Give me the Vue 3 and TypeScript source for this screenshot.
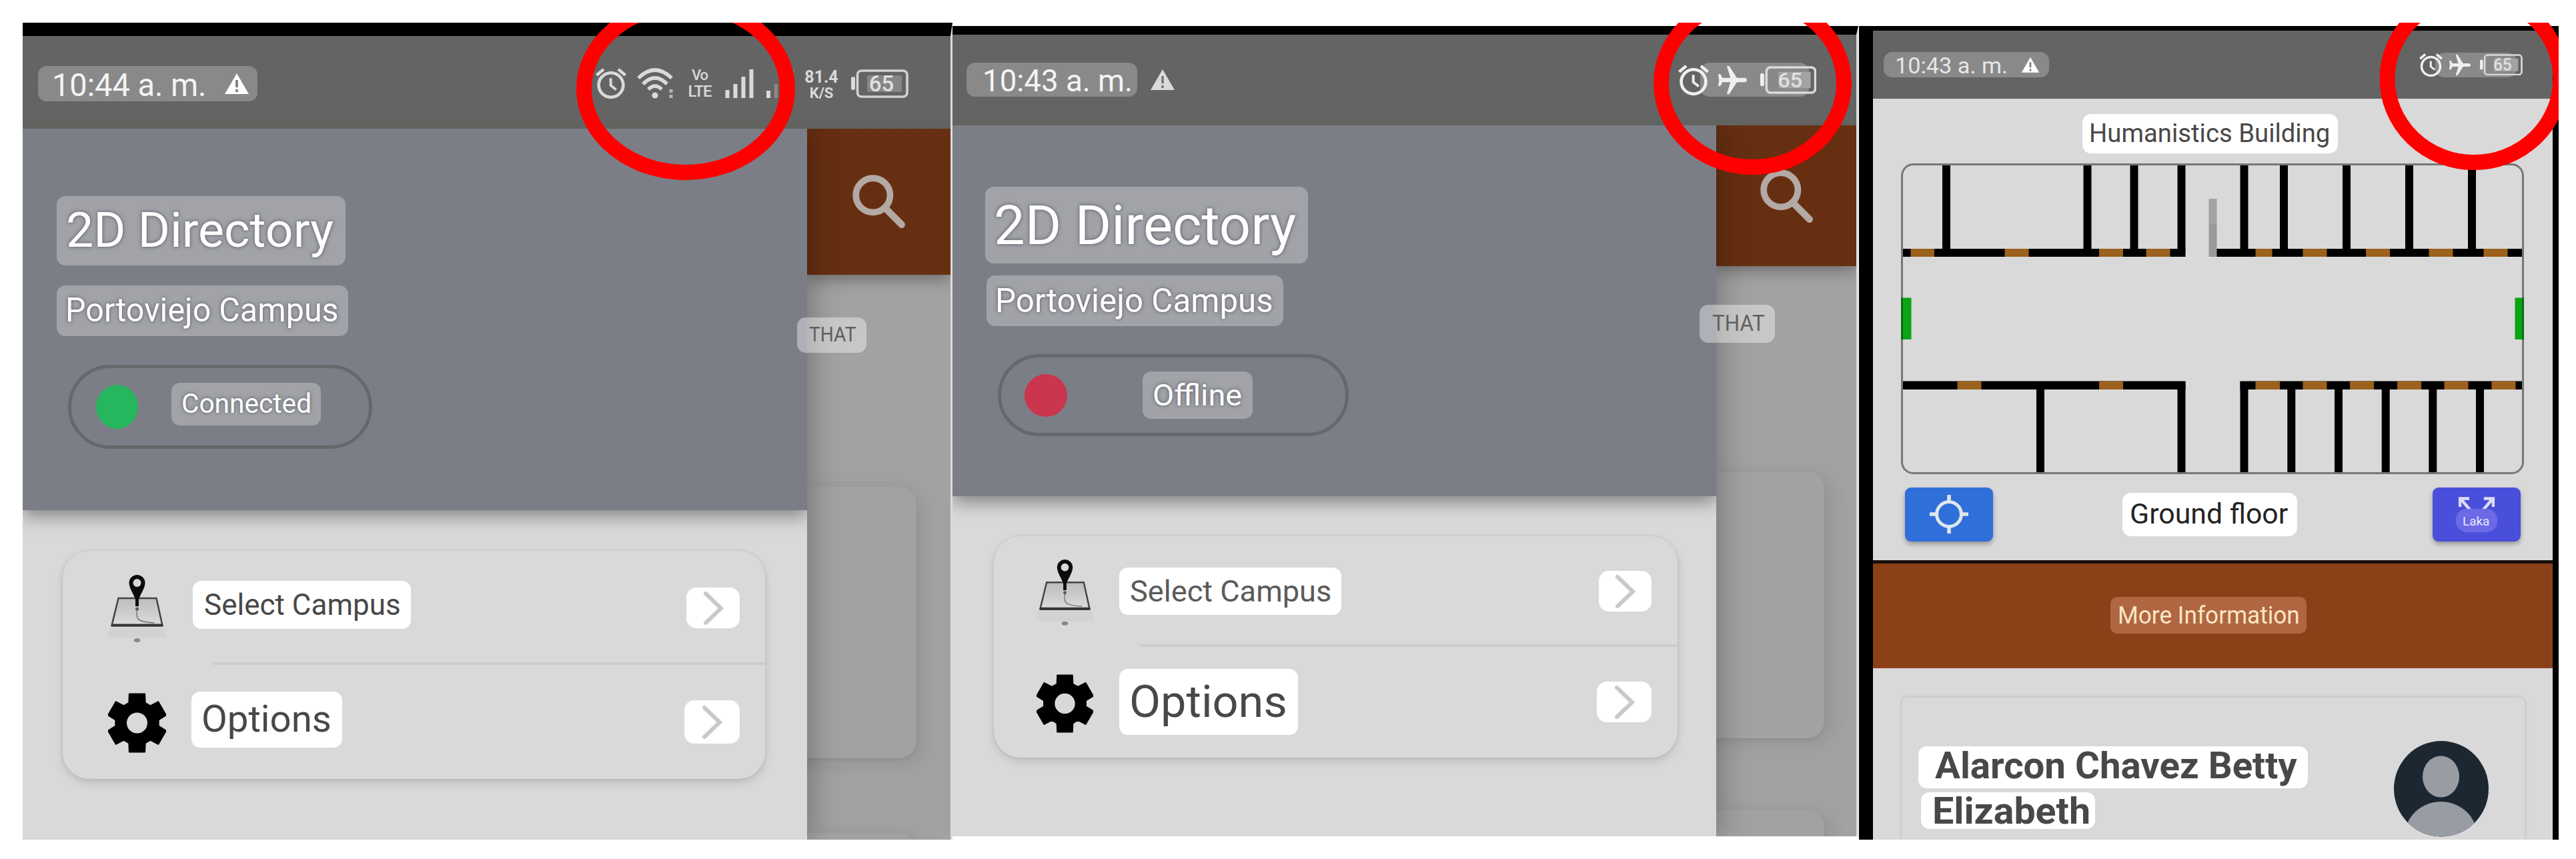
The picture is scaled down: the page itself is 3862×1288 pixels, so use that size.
<script setup lang="ts">
import { h, type FunctionalComponent } from 'vue'

interface Label {
  text: string
  w: number
  h: number
  /** distance from the left edge of the label to the first glyph */
  x: number
  /** baseline, measured from the top of the label */
  b: number
  size: number
  /** width the words take up */
  ink: number
  weight?: number
}

const FAMILY = 'Roboto, "Liberation Sans", sans-serif'
const ctx = document.createElement('canvas').getContext('2d')!

/* Stretches the words horizontally so that they fill their share of the label */
function labelStyles(l: Label) {
  ctx.font = `${l.weight ?? 400} ${l.size}px ${FAMILY}`
  const m = ctx.measureText(l.text)
  const ink = m.actualBoundingBoxRight + m.actualBoundingBoxLeft
  const scale = l.ink / ink
  return {
    box: {
      width: `${l.w}px`,
      height: `${l.h}px`,
      paddingLeft: `${Math.max(0, l.x + m.actualBoundingBoxLeft * scale).toFixed(2)}px`,
      fontSize: `${l.size}px`,
      fontWeight: String(l.weight ?? 400),
      lineHeight: `${(2 * (l.b - 0.3418 * l.size)).toFixed(2)}px`,
    },
    words: {
      display: 'block',
      width: 'max-content',
      transform: `scaleX(${scale.toFixed(4)})`,
      transformOrigin: 'left center',
    },
  }
}

const Tag: FunctionalComponent<{ l: Label }> = (props) => {
  const s = labelStyles(props.l)
  return h('span', { class: 'tag', style: s.box }, [h('span', { style: s.words }, props.l.text)])
}
Tag.props = ['l']

interface Row {
  icon: 'map' | 'gear'
  label: Label
}
interface Drawer {
  id: string
  time: Label
  title: Label
  campus: Label
  state: Label
  rows: Row[]
  that: Label
}

const drawers: Drawer[] = [
  {
    id: 'online',
    time: { text: '10:44 a. m.', w: 329.5, h: 53, x: 25.5, b: 45, size: 48, ink: 224 },
    title: { text: '2D Directory', w: 433, h: 104, x: 17, b: 77, size: 72, ink: 398 },
    campus: { text: 'Portoviejo Campus', w: 437, h: 76, x: 17, b: 55, size: 50, ink: 404 },
    state: { text: 'Connected', w: 224, h: 64, x: 17, b: 46, size: 41, ink: 191 },
    rows: [
      { icon: 'map', label: { text: 'Select Campus', w: 327, h: 72, x: 18, b: 51.5, size: 44, ink: 292 } },
      { icon: 'gear', label: { text: 'Options', w: 226, h: 84, x: 18, b: 61, size: 56, ink: 190 } },
    ],
    that: { text: 'THAT', w: 104, h: 53, x: 18, b: 37, size: 31, ink: 70 },
  },
  {
    id: 'offline',
    time: { text: '10:43 a. m.', w: 256, h: 51, x: 27, b: 43.5, size: 46, ink: 219 },
    title: { text: '2D Directory', w: 484.5, h: 115.5, x: 17, b: 86.5, size: 81, ink: 450 },
    campus: { text: 'Portoviejo Campus', w: 444.5, h: 76, x: 17, b: 56, size: 50, ink: 411 },
    state: { text: 'Offline', w: 165, h: 71, x: 17, b: 51, size: 45, ink: 131 },
    rows: [
      { icon: 'map', label: { text: 'Select Campus', w: 332.5, h: 71, x: 17, b: 51.5, size: 45, ink: 299 } },
      { icon: 'gear', label: { text: 'Options', w: 268, h: 99, x: 18, b: 72, size: 67, ink: 231 } },
    ],
    that: { text: 'THAT', w: 113, h: 57, x: 19, b: 39.5, size: 33, ink: 78 },
  },
]

const floor = {
  time: { text: '10:43 a. m.', w: 248, h: 38.5, x: 20, b: 32.5, size: 34, ink: 165 } as Label,
  building: { text: 'Humanistics Building', w: 383.5, h: 59, x: 13.5, b: 42.5, size: 39, ink: 356.5 } as Label,
  ground: { text: 'Ground floor', w: 262, h: 64.5, x: 13, b: 46.5, size: 42, ink: 235 } as Label,
  laka: { text: 'Laka', w: 62, h: 35, x: 11, b: 25, size: 19, ink: 39 } as Label,
  more: { text: 'More Information', w: 294, h: 55.5, x: 12.5, b: 41, size: 36, ink: 269 } as Label,
  name1: { text: 'Alarcon Chavez Betty', w: 583.5, h: 63, x: 24.5, b: 48.5, size: 55, ink: 543, weight: 700 } as Label,
  name2: { text: 'Elizabeth', w: 261, h: 55, x: 21, b: 47.5, size: 55, ink: 231, weight: 700 } as Label,
}

/* Floor plan, in plan coordinates: wall positions, then doors as [start, length] */
const topWalls = [2912, 3123.5, 3193.5, 3264.5, 3358.5, 3418, 3512, 3606, 3700]
const bottomWalls = [3053, 3264.5, 3358.5, 3429.3, 3500, 3570.7, 3641.3, 3712]
const topDoors = [[2864.5, 35.5], [3005.5, 36], [3147, 36], [3217.5, 36], [3381.5, 25], [3452.5, 36], [3547, 36], [3641.5, 36], [3723.5, 36]]
const bottomDoors = [[2934.5, 36], [3147, 36], [3381.5, 36.5], [3452.5, 36], [3523, 36], [3594, 36], [3664.5, 36], [3735.5, 36]]

/* Six-tooth gear outline round the origin */
const gear = (() => {
  const pts: string[] = []
  for (let i = 0; i < 6; i++) {
    const c = i * 60 - 90
    for (const [r, a] of [[32.5, -22], [45, -15], [45, 15], [32.5, 22]]) {
      const t = ((c + a) * Math.PI) / 180
      pts.push(`${(r * Math.cos(t)).toFixed(1)} ${(r * Math.sin(t)).toFixed(1)}`)
    }
  }
  return `M${pts.join('L')}Z M16.5 0A16.5 16.5 0 1 0 -16.5 0A16.5 16.5 0 1 0 16.5 0Z`
})()

const alarm =
  'M22 5.72l-4.6-3.86-1.29 1.53 4.6 3.86L22 5.72zM7.88 3.39L6.6 1.86 2 5.71l1.29 1.53 4.59-3.85zM12.7 8.5H11v5.2l3.9 3 .95-1.3-3.15-2.5V8.5zM12 4c-4.97 0-9 4.03-9 9s4.02 9 9 9c4.97 0 9-4.03 9-9s-4.03-9-9-9zm0 16c-3.87 0-7-3.13-7-7s3.13-7 7-7 7 3.13 7 7-3.13 7-7 7z'
const plane =
  'M21 16v-1.7l-8-5.3V3.5c0-.83-.67-1.5-1.5-1.5S10 2.67 10 3.5V9l-8 5.3v1.7l8-2.5V19l-2.6 1.5V22l4.1-.6 4.1.6v-1.5L13 19v-5.5l8 2.5z'
</script>

<template>
  <main class="stage">
    <section v-for="d in drawers" :key="d.id" class="phone" :class="d.id">
      <header class="status">
        <Tag class="veil time" :l="d.time" />
        <svg class="warn" viewBox="0 0 38 33">
          <path class="fill" d="M19 1L37 32H1Z" />
          <path d="M19 11v11M19 25v4" stroke="#777" stroke-width="3.6" />
        </svg>
        <div v-if="d.id === 'online'" class="icons">
          <svg class="alarm" viewBox="2 1.8 20 20.2" preserveAspectRatio="none"><path class="fill" :d="alarm" /></svg>
          <svg class="wifi" viewBox="0 0 56 46">
            <g fill="none" stroke="#dadada" stroke-width="5.5">
              <path d="M2 15Q27 -9 52 15" />
              <path d="M9 24Q27 6 45 24" />
              <path d="M17 32Q27 22 37 32" />
            </g>
            <circle class="fill" cx="27" cy="41" r="4.6" />
            <path d="M51 32v5M51 40v5" stroke="#b5b5b5" stroke-width="5" />
          </svg>
          <div class="stack lte"><span class="vo">Vo</span><span>LTE</span></div>
          <svg class="signal" viewBox="0 0 105 44">
            <path d="M3.5 44V32M15.5 44V23M27.5 44V12M39.5 44V1M65 44V33" stroke="#dadada" stroke-width="6" />
            <path d="M76.500 44V23" stroke="#8a8a8a" stroke-width="5" />
            <path d="M102 44V2" stroke="#888" stroke-width="2" />
          </svg>
          <div class="stack speed"><span class="rate">81.4</span><span>K/S</span></div>
          <svg class="battery" viewBox="0 0 86 43" preserveAspectRatio="none">
            <rect class="fill" x="0" y="11" width="6" height="20" rx="3" />
            <rect x="9.5" y="2" width="74.5" height="39" rx="6" fill="none" stroke="#d2d2d2" stroke-width="3.6" />
            <rect x="24" y="9" width="52" height="25" rx="2" fill="#868686" />
            <text x="45.5" y="33" text-anchor="middle">65</text>
          </svg>
        </div>
        <div v-else class="icons">
          <span class="glow"></span>
          <svg class="alarm" viewBox="2 1.8 20 20.2" preserveAspectRatio="none"><path class="fill" :d="alarm" /></svg>
          <svg class="plane" viewBox="2 2 20 19" preserveAspectRatio="none"><path class="fill" transform="rotate(90 12 12)" :d="plane" /></svg>
          <svg class="battery" viewBox="0 0 86 43" preserveAspectRatio="none">
            <rect class="fill" x="0" y="11" width="6" height="20" rx="3" />
            <rect x="9.5" y="2" width="74.5" height="39" rx="6" fill="none" stroke="#dadada" stroke-width="3.6" />
            <rect x="28" y="9" width="49" height="25" rx="2" fill="#a3a3a3" />
            <text x="45.5" y="33" text-anchor="middle">65</text>
          </svg>
        </div>
      </header>

      <div class="body">
        <aside class="drawer">
          <div class="head">
            <Tag class="veil halo title" :l="d.title" />
            <Tag class="veil halo campus" :l="d.campus" />
            <div class="state">
              <i class="dot"></i>
              <Tag class="veil halo state-label" :l="d.state" />
            </div>
          </div>
          <ul class="card">
            <li v-for="r in d.rows" :key="r.icon" :class="r.icon">
              <svg v-if="r.icon === 'map'" class="row-icon" viewBox="-43.5 -52 87 104">
                <defs>
                  <linearGradient id="sheet" x1="0" y1="0" x2="0" y2="1">
                    <stop offset="0" stop-color="#bdbdbd" />
                    <stop offset="1" stop-color="#dcdcdc" />
                  </linearGradient>
                </defs>
                <path d="M-41 29h82l3 14h-88z" fill="#cfcfcf" opacity=".8" />
                <path d="M-28 -16H29L38 25H-38Z" fill="url(#sheet)" stroke="#444" stroke-width="2.5" />
                <path d="M-38 24.5H38" stroke="#333" stroke-width="4" />
                <path d="M0 2Q-2 14 4 17T26 21" fill="none" stroke="#777" stroke-width="1.5" />
                <path fill-rule="evenodd" d="M0 -7C-3 -20 -12 -30 -12 -39A12 12 0 0 1 12 -39C12 -30 3 -20 0 -7ZM6 -39A6 6 0 1 0 -6 -39A6 6 0 1 0 6 -39Z" fill="#0c0c0c" />
                <path d="M0 -20V-4" stroke="#0c0c0c" stroke-width="5" />
                <circle cx="0" cy="0" r="2.5" fill="#555" />
                <ellipse cx="0" cy="47" rx="5" ry="3" fill="#888" />
              </svg>
              <svg v-else class="row-icon" viewBox="-43.5 -46 87 92">
                <path :d="gear" fill-rule="evenodd" stroke="#000" stroke-width="2" stroke-linejoin="round" />
              </svg>
              <Tag class="solid" :l="r.label" />
              <span class="go">
                <svg viewBox="0 0 30 50"><path d="M3 3L26 25L3 47" fill="none" stroke="#c9c9c9" stroke-width="6" stroke-linecap="round" /></svg>
              </span>
            </li>
          </ul>
        </aside>
        <div class="backdrop">
          <div class="toolbar">
            <svg class="search" viewBox="0 0 80 80">
              <circle cx="32" cy="31" r="25" fill="none" stroke="#b3aaa5" stroke-width="9.5" />
              <path d="M49 49L74 74" stroke="#b3aaa5" stroke-width="10" stroke-linecap="round" />
            </svg>
          </div>
          <div class="ghost"></div>
          <div class="ghost next"></div>
        </div>
        <Tag class="that" :l="d.that" />
      </div>
    </section>

    <section class="phone floor">
      <header class="status">
        <Tag class="veil time" :l="floor.time" />
        <svg class="warn" viewBox="0 0 38 33">
          <path class="fill" d="M19 1L37 32H1Z" />
          <path d="M19 11v11M19 25v4" stroke="#777" stroke-width="3.6" />
        </svg>
        <div class="icons">
          <span class="glow"></span>
          <svg class="alarm" viewBox="2 1.8 20 20.2" preserveAspectRatio="none"><path class="fill" :d="alarm" /></svg>
          <svg class="plane" viewBox="2 2 20 19" preserveAspectRatio="none"><path class="fill" transform="rotate(90 12 12)" :d="plane" /></svg>
          <svg class="battery" viewBox="0 0 86 43" preserveAspectRatio="none">
            <rect class="fill" x="0" y="11" width="6" height="20" rx="3" />
            <rect x="9.5" y="2" width="74.5" height="39" rx="6" fill="none" stroke="#dadada" stroke-width="3.6" />
            <rect x="28" y="9" width="49" height="25" rx="2" fill="#a3a3a3" />
            <text x="45.5" y="33" text-anchor="middle">65</text>
          </svg>
        </div>
      </header>
      <Tag class="solid building" :l="floor.building" />
      <svg class="plan" viewBox="2850 245 934 466">
        <g fill="#000">
          <rect v-for="x in topWalls" :key="'t' + x" :x="x" y="246" width="12" height="130" />
          <rect v-for="x in bottomWalls" :key="'b' + x" :x="x" y="573" width="12" height="136" />
          <rect x="2852" y="373" width="424.5" height="12" />
          <rect x="3323" y="373" width="460" height="12" />
          <rect x="2852" y="571.5" width="424.5" height="12.5" />
          <rect x="3358.5" y="571.5" width="424.5" height="12.5" />
        </g>
        <g fill="#9b611d">
          <rect v-for="d in topDoors" :key="'td' + d[0]" :x="d[0]" y="373" :width="d[1]" height="12" />
          <rect v-for="d in bottomDoors" :key="'bd' + d[0]" :x="d[0]" y="571.5" :width="d[1]" height="12.5" />
        </g>
        <rect x="3311.5" y="298" width="12" height="38" fill="#a3a3a3" />
        <rect x="3311.5" y="336" width="12" height="49" fill="#999" />
        <rect x="2851" y="446.5" width="14.5" height="62.5" fill="#0ca315" />
        <rect x="3770.5" y="446.5" width="12.5" height="62.5" fill="#0ca315" />
        <rect x="2851.5" y="246.5" width="931" height="463" rx="17" fill="none" stroke="#777" stroke-width="3" />
        <path d="M2851.5 446.5v62.5M3782.5 446.5v62.5" stroke="#0a6c12" stroke-width="3" />
      </svg>
      <div class="controls">
        <span class="btn locate">
          <svg viewBox="-30 -30 60 60">
            <circle r="18.5" fill="none" stroke="#dfe6ee" stroke-width="5" />
            <path d="M0 -29v11M0 29v-11M-29 0h11M29 0h-11" stroke="#dfe6ee" stroke-width="5.5" />
          </svg>
        </span>
        <Tag class="solid ground" :l="floor.ground" />
        <span class="btn expand">
          <svg viewBox="0 0 54 24">
            <path d="M20 23L4 4M2 15V2.5H16M34 23L50 4M52 15V2.5H38" fill="none" stroke="#dcdcf4" stroke-width="4.5" />
          </svg>
          <Tag class="laka" :l="floor.laka" />
        </span>
      </div>
      <div class="banner"><Tag class="more" :l="floor.more" /></div>
      <article class="person">
        <div class="names">
          <Tag class="solid" :l="floor.name1" />
          <Tag class="solid second" :l="floor.name2" />
        </div>
        <svg class="avatar" viewBox="0 0 142 143.5" preserveAspectRatio="none">
          <defs><clipPath id="face"><ellipse cx="71" cy="71.75" rx="71" ry="71.75" /></clipPath></defs>
          <g clip-path="url(#face)">
            <rect width="142" height="144" fill="#1c2731" />
            <ellipse cx="70.5" cy="53.5" rx="27.5" ry="31" fill="#989da4" />
            <ellipse cx="70.5" cy="142" rx="54" ry="51" fill="#989da4" />
          </g>
        </svg>
      </article>
    </section>

    <svg class="rings" viewBox="0 34 3835.5 260">
      <g fill="none" stroke="#f00" stroke-width="23">
        <ellipse cx="1028" cy="133" rx="152.5" ry="125.5" />
        <ellipse cx="2627.5" cy="125" rx="137" ry="125.5" />
        <ellipse cx="3709" cy="118" rx="130" ry="125.5" />
      </g>
    </svg>
  </main>
</template>

<style>
body {
  margin: 0;
  background: #fff;
}
</style>

<style scoped>
.stage {
  position: relative;
  display: flex;
  align-items: flex-start;
  box-sizing: border-box;
  width: 3862px;
  height: 1288px;
  padding: 34px 0 0 34px;
  overflow: hidden;
  background: #fff;
  font-family: Roboto, "Liberation Sans", sans-serif;
}
svg {
  display: block;
  flex: none;
}
.fill {
  fill: #dadada;
}
.tag {
  display: block;
  flex: none;
  box-sizing: border-box;
  white-space: pre;
  border-radius: 13px;
}
.veil {
  color: #f4f4f4;
  background: rgba(255, 255, 255, 0.29);
}
.halo {
  color: #fff;
  text-shadow: 0 0 4px #707278, 0 0 6px #707278;
}
.solid {
  color: #484848;
  background: #fff;
}
.rings {
  position: absolute;
  top: 34px;
  left: 0;
  width: 3835.5px;
  height: 260px;
  z-index: 5;
}

/* Phone frame */
.phone {
  flex: none;
  display: flex;
  flex-direction: column;
  box-sizing: border-box;
  border-top: solid #000;
  background: #d9d9d9;
}
.online {
  width: 1394px;
  height: 1224.5px;
  border-top-width: 20px;
  border-right: 3px solid #dcdcdc;
}
.offline {
  width: 1358px;
  height: 1215.5px;
  margin-top: 4.5px;
  border-top-width: 13px;
  border-right: 3px solid #dcdcdc;
}
.floor {
  width: 1048.5px;
  height: 1220px;
  margin: 4.5px 0 0 1px;
  border: solid #000;
  border-width: 7.5px 9.5px 0 21.5px;
}

/* Status bar */
.status {
  flex: none;
  display: flex;
  align-items: center;
  box-sizing: border-box;
  background: linear-gradient(#646464 88%, #61635f);
}
.online .status {
  height: 139px;
  padding: 3px 63px 0 22.5px;
}
.offline .status {
  height: 136px;
  padding: 0 60px 0 21px;
}
.floor .status {
  height: 102px;
  padding: 1px 45px 0 15.5px;
  background: #646464;
}
.status .veil {
  background: #898989;
}
.floor .time {
  color: #e6e6e6;
}
.warn {
  width: 38px;
  height: 33px;
}
.online .warn {
  margin-left: -50px;
}
.offline .warn {
  margin-left: 18.5px;
}
.floor .warn {
  width: 28px;
  height: 24.5px;
  margin-left: -41.5px;
}
.online .warn .fill,
.floor .warn .fill {
  fill: #fff;
}
.icons {
  position: relative;
  display: flex;
  align-items: center;
  margin-left: auto;
}
.icons svg {
  position: relative;
}
.alarm {
  width: 46px;
  height: 46px;
}
.wifi {
  width: 56px;
  height: 46px;
  margin-left: 16px;
}
.stack {
  display: flex;
  flex-direction: column;
  align-items: center;
  color: #dadada;
  font-weight: 500;
}
.lte {
  width: 42px;
  margin-left: 17px;
  font-size: 24px;
  line-height: 26px;
  letter-spacing: -1px;
}
.vo {
  font-size: 22px;
  line-height: 23px;
}
.signal {
  width: 105px;
  height: 44px;
  margin-left: 17px;
}
.speed {
  width: 51px;
  margin: 4px 0 0 14px;
  font-size: 22px;
  font-weight: 700;
  line-height: 23px;
}
.rate {
  font-size: 25px;
  line-height: 25px;
}
.battery {
  width: 86px;
  height: 43px;
}
.online .battery {
  margin-left: 19px;
}
.battery text {
  font: 500 33px Roboto, "Liberation Sans", sans-serif;
  fill: #e0e0e0;
}
.glow {
  position: absolute;
  background: #898989;
  border-radius: 14px;
}
.offline .glow {
  left: 33px;
  top: -3px;
  width: 163px;
  height: 51px;
}
.offline .plane {
  width: 43px;
  height: 42px;
  margin-left: 14px;
}
.offline .battery {
  width: 84.5px;
  height: 42px;
  margin-left: 19.5px;
}
.offline .icons .fill,
.floor .icons .fill {
  fill: #efefef;
}
.floor .glow {
  left: 24px;
  top: -1px;
  width: 122px;
  height: 37px;
}
.floor .alarm {
  width: 35px;
  height: 35px;
}
.floor .plane {
  width: 32px;
  height: 31px;
  margin-left: 10px;
}
.floor .battery {
  width: 64px;
  height: 32.5px;
  margin-left: 14px;
}

/* Drawer */
.body {
  position: relative;
  flex: 1;
  display: flex;
  min-height: 0;
  overflow: hidden;
}
.drawer {
  z-index: 1;
  flex: none;
  background: #d9d9d9;
  box-shadow: 4px 0 44px rgba(0, 0, 0, 0.3);
}
.head {
  display: flex;
  flex-direction: column;
  align-items: flex-start;
  box-sizing: border-box;
  background: #7b7e86;
  box-shadow: 0 8px 26px rgba(0, 0, 0, 0.42);
  clip-path: inset(0 0 -60px 0);
}
.state {
  display: flex;
  align-items: center;
  box-sizing: border-box;
  border: 5px solid #67676c;
  border-radius: 70px;
}
.dot {
  flex: none;
  border-radius: 50%;
}
.card {
  margin: 0;
  padding: 0;
  list-style: none;
  border-radius: 40px;
  background: #d9d9d9;
  box-shadow: 0 6px 14px rgba(0, 0, 0, 0.13), 0 0 4px rgba(0, 0, 0, 0.08);
}
.card li {
  display: flex;
  align-items: center;
  box-sizing: border-box;
  height: 50%;
}
.card .map {
  background: linear-gradient(#cdcdcd, #cdcdcd) right bottom / calc(100% - 225px) 4px no-repeat;
}
.go {
  display: flex;
  align-items: center;
  justify-content: center;
  box-sizing: border-box;
  height: 61px;
  margin-left: auto;
  border-radius: 15px;
  background: #fff;
}
.go svg {
  width: 30px;
  height: 50px;
  margin-left: 2px;
}

.online .drawer {
  width: 1176px;
}
.online .head {
  height: 572px;
  padding: 101px 0 0 51px;
}
.online .campus {
  margin-top: 30px;
}
.online .state {
  width: 456px;
  height: 126px;
  margin: 43px 0 0 17px;
}
.online .dot {
  width: 63px;
  height: 66px;
  margin-left: 37px;
  background: #26b65e;
}
.online .state-label {
  margin: 0 0 9px 50px;
}
.online .card {
  width: 1053px;
  height: 342px;
  margin: 61px 0 0 60px;
}
.online .row-icon {
  width: 87px;
  margin: 3px 0 0 68px;
}
.online .map .solid {
  margin: 0 0 9px 40px;
}
.online .gear .solid {
  margin: 0 0 7px 38px;
}
.online .go {
  width: 80px;
  margin-right: 38.5px;
}
.online .gear .go {
  width: 83px;
  height: 65px;
}

.offline .drawer {
  width: 1145px;
}
.offline .head {
  height: 556.5px;
  padding: 92px 0 0 48.5px;
}
.offline .campus {
  margin: 18px 0 0 2.5px;
}
.offline .state {
  width: 526.5px;
  height: 123px;
  margin: 42px 0 0 19px;
}
.offline .dot {
  width: 64px;
  height: 64px;
  margin-left: 35px;
  background: #cb354e;
}
.offline .state-label {
  margin-left: 113.5px;
}
.offline .card {
  width: 1025.5px;
  height: 332.5px;
  margin: 59.5px 0 0 61.5px;
}
.offline .card .map {
  background-size: calc(100% - 218px) 4px;
}
.offline .row-icon {
  width: 85px;
  margin: 4px 0 0 64.5px;
}
.offline .solid {
  margin-left: 39px;
}
.offline .map .solid {
  color: #5a5a5a;
}
.offline .go {
  width: 78.5px;
  margin-right: 39.5px;
}
.offline .gear .go {
  width: 81.5px;
}

/* Page behind the drawer */
.backdrop {
  flex: 1;
  min-width: 0;
  overflow: hidden;
  background: #a2a2a2;
}
.toolbar {
  box-sizing: border-box;
  background: #672f12;
  box-shadow: 0 4px 24px rgba(0, 0, 0, 0.4);
}
.search {
  width: 82px;
  height: 82px;
}
.ghost {
  margin-left: -40px;
  border-radius: 26px;
  background: #a2a2a2;
  box-shadow: 8px 6px 30px rgba(0, 0, 0, 0.1), 0 3px 5px rgba(0, 0, 0, 0.05);
}
.that {
  position: absolute;
  z-index: 2;
  color: #606060;
  background: rgba(255, 255, 255, 0.4);
}
.online .toolbar {
  height: 219px;
  padding: 68px 0 0 66px;
}
.online .ghost {
  width: 204px;
  height: 407px;
  margin-top: 318px;
}
.online .ghost.next {
  margin-top: 112px;
}
.online .that {
  left: 1161px;
  top: 283px;
}
.offline .toolbar {
  height: 211px;
  padding: 65px 0 0 64px;
}
.offline .ghost {
  width: 202px;
  height: 400px;
  margin-top: 308.5px;
}
.offline .ghost.next {
  margin-top: 107px;
}
.offline .that {
  left: 1120px;
  top: 269.5px;
}

/* Floor screen */
.building {
  margin: 23.5px 0 0 313.5px;
}
.plan {
  width: 934px;
  height: 466px;
  margin: 14.5px 0 0 41.5px;
}
.controls {
  display: flex;
  align-items: center;
  height: 80.5px;
  margin: 20.5px 47.5px 0 48px;
}
.btn {
  flex: none;
  display: flex;
  flex-direction: column;
  align-items: center;
  box-sizing: border-box;
  width: 132px;
  height: 80.5px;
  border-radius: 9px;
  box-shadow: 0 4px 7px rgba(0, 0, 0, 0.3);
}
.locate {
  justify-content: center;
  background: #2f6fd9;
}
.locate svg {
  width: 60px;
  height: 60px;
}
.ground {
  margin-left: 194px;
  color: #242424;
}
.expand {
  margin-left: auto;
  padding-top: 14px;
  background: #4a4fdb;
}
.expand svg {
  width: 54px;
  height: 24px;
}
.laka {
  margin-top: -6px;
  border-radius: 16px;
  color: #e8e8fb;
  background: #6b69e6;
}
.banner {
  flex: none;
  box-sizing: border-box;
  height: 162px;
  margin-top: 28px;
  padding: 50px 0 0 356px;
  border-top: 5px solid #17100c;
  background: #8b4018;
}
.more {
  color: #fbe6c6;
  background: #b06640;
  border-radius: 10px;
}
.person {
  flex: 1;
  display: flex;
  box-sizing: border-box;
  min-height: 0;
  margin: 44px 42px 0 43.5px;
  padding: 65.5px 0 0 24.5px;
  border-radius: 8px 8px 0 0;
  box-shadow: 0 0 6px rgba(0, 0, 0, 0.16);
  clip-path: inset(-10px -10px 0 -10px);
}
.names {
  flex: none;
  padding-top: 8px;
}
.second {
  margin: 6px 0 0 3.5px;
}
.avatar {
  width: 142px;
  height: 143.5px;
  margin-left: 129px;
}
</style>
